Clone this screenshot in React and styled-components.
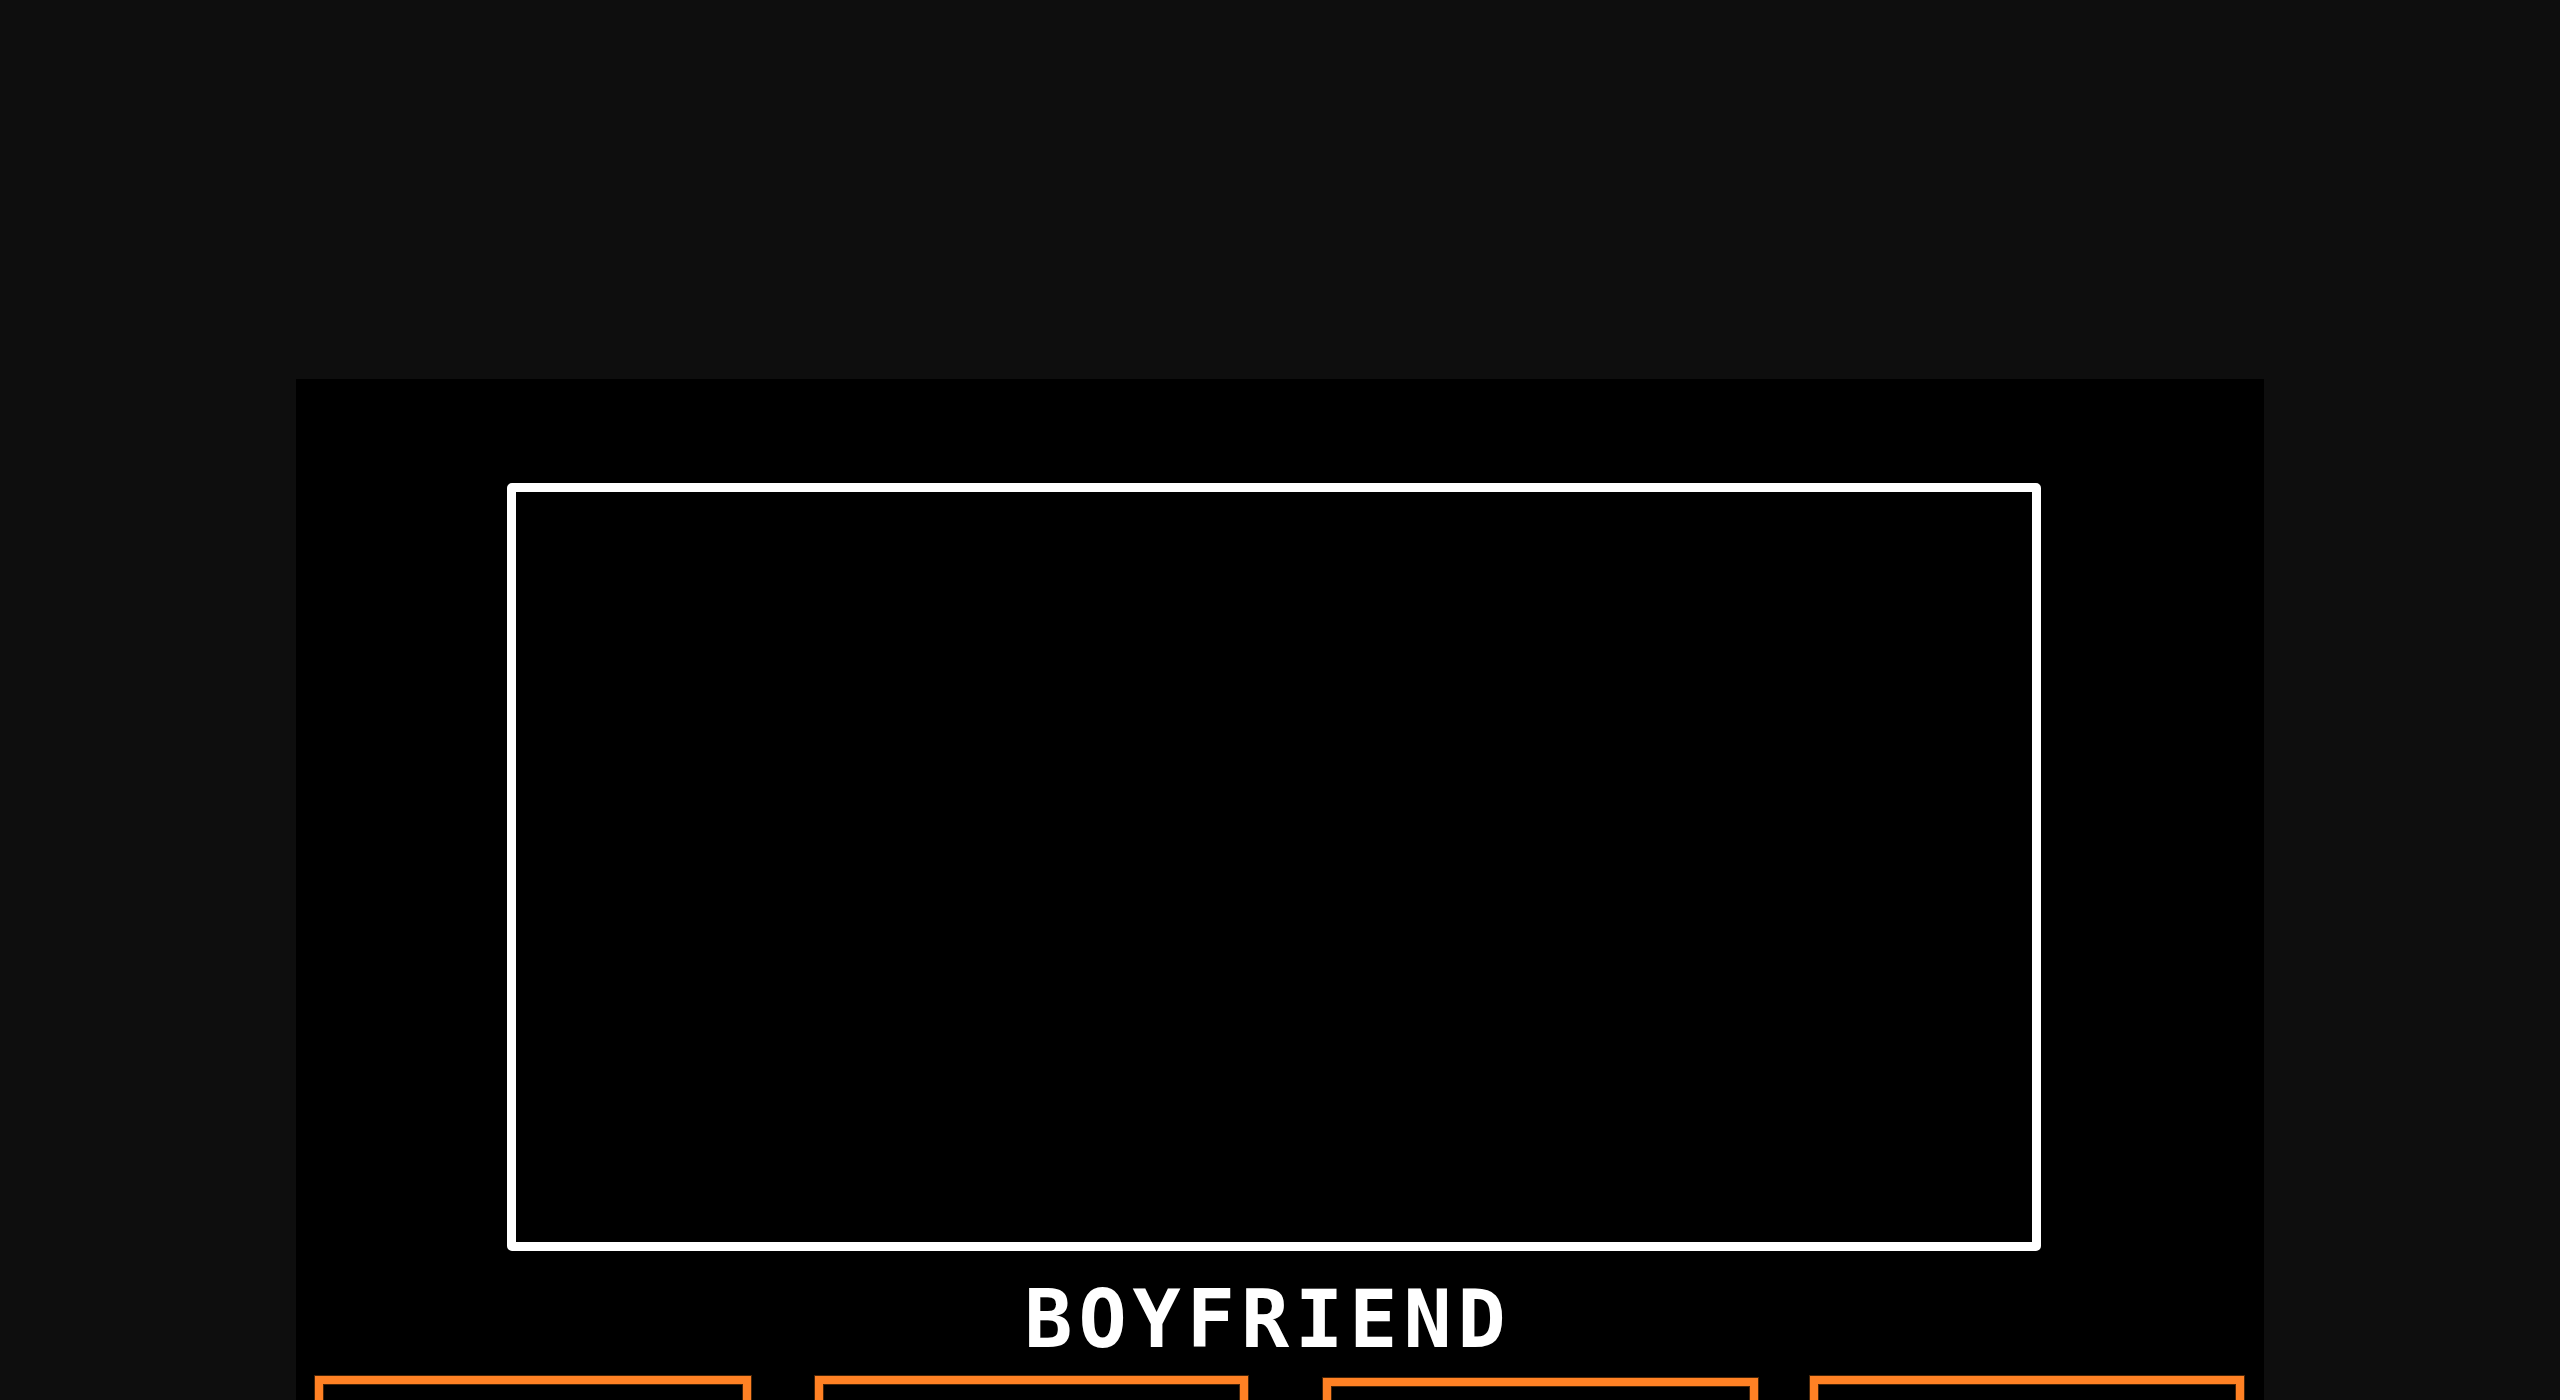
import styled, { createGlobalStyle } from "styled-components";

const GlobalStyle = createGlobalStyle`
  html, body {
    margin: 0;
    padding: 0;
    background: #0e0e0e;
    font-family: "DejaVu Sans Mono", "Liberation Mono", monospace;
  }
`;

const characters = [
  { id: 1, width: 436, offset: 19, drop: 0 },
  { id: 2, width: 433, offset: 64, drop: 0 },
  { id: 3, width: 435, offset: 75, drop: 2 },
  { id: 4, width: 434, offset: 52, drop: 0 },
];

function App() {
  return (
    <>
      <GlobalStyle />
      <Page>
        <Panel>
          <Stage>
            <Screen />
            <Name>BOYFRIEND</Name>
          </Stage>
          <CardRow>
            {characters.map((c) => (
              <CharCard key={c.id} $width={c.width} $offset={c.offset} $drop={c.drop} />
            ))}
          </CardRow>
        </Panel>
      </Page>
    </>
  );
}

export default App;

const Page = styled.div`
  min-height: 100vh;
  padding-top: 379px;
  display: flex;
  justify-content: center;
  overflow: hidden;
`;

const Panel = styled.div`
  width: 1968px;
  background: #000;
  padding-top: 104px;
  padding-bottom: 200px;
`;

const Stage = styled.div`
  display: flex;
  flex-direction: column;
  align-items: center;
  padding: 0 223px 0 211px;
`;

const Screen = styled.div`
  box-sizing: border-box;
  width: 1534px;
  height: 768px;
  border: 9px solid #fff;
  border-radius: 5px;
  background: #000;
`;

const Name = styled.h1`
  margin: 29px 0 0 -12px;
  font-family: "DejaVu Sans Mono", "Liberation Mono", monospace;
  font-weight: 700;
  font-size: 80px;
  line-height: 80px;
  color: #fff;
  letter-spacing: 6px;
`;

const CardRow = styled.div`
  display: flex;
  align-items: flex-start;
  margin-top: 16px;
`;

const CharCard = styled.div`
  box-sizing: border-box;
  width: ${(p) => p.$width}px;
  height: 320px;
  margin-left: ${(p) => p.$offset}px;
  margin-top: ${(p) => p.$drop}px;
  border: 8px solid #ff8124;
  border-bottom: none;
  box-shadow: 0 0 0 1px rgba(120, 60, 10, 0.6), inset 0 0 0 1px rgba(120, 60, 10, 0.6);
`;
